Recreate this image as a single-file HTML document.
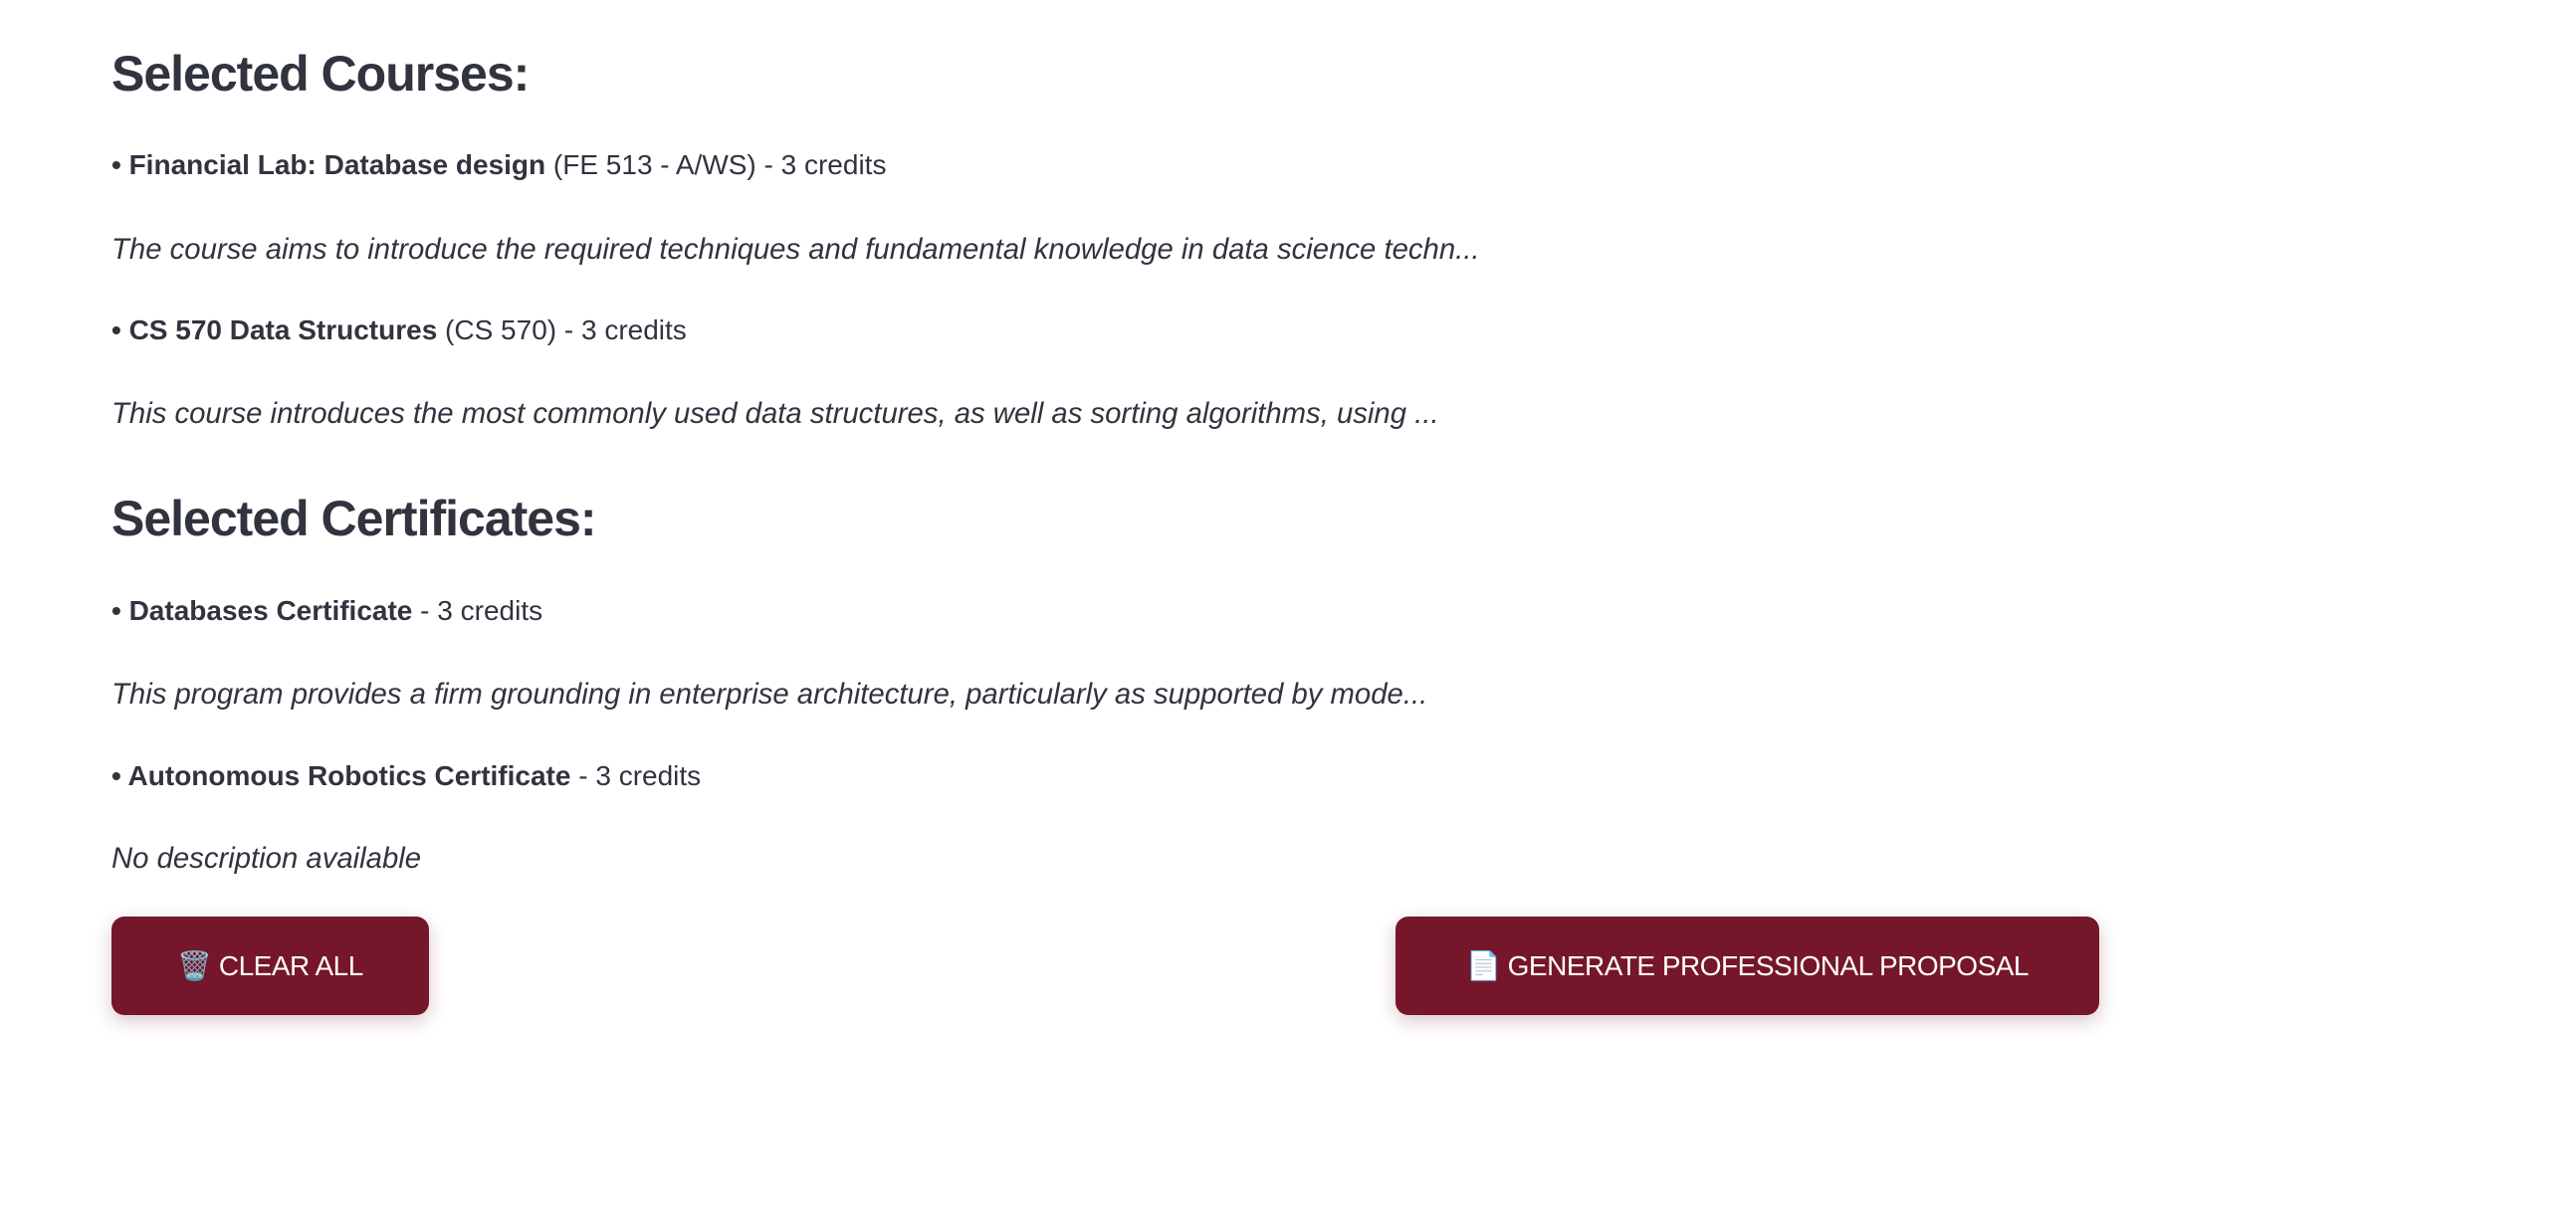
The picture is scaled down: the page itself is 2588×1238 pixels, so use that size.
<!DOCTYPE html>
<html><head><meta charset="utf-8"><style>
html,body{margin:0;padding:0;background:#fff;width:2588px;height:1238px;overflow:hidden;}
body{font-family:"Liberation Sans",sans-serif;color:#31333f;position:relative;}
.t{position:absolute;left:112px;white-space:nowrap;font-size:28px;line-height:34px;}
.t.it{font-size:29.3px;}
.h{position:absolute;left:112px;font-weight:bold;font-size:50px;line-height:60px;white-space:nowrap;letter-spacing:-1px;}
i{font-style:italic;}
.btn{position:absolute;top:921px;height:99px;background:#75162a;border-radius:13px;color:#fff;font-size:28px;display:flex;align-items:center;justify-content:center;box-shadow:0 6px 18px rgba(117,22,42,0.25);letter-spacing:-0.5px;}
</style></head><body>
<div class="h" style="top:44px">Selected Courses:</div>
<div class="t" style="top:149px"><b>• Financial Lab: Database design</b> (FE 513 - A/WS) - 3 credits</div>
<div class="t it" style="top:234px"><i>The course aims to introduce the required techniques and fundamental knowledge in data science techn...</i></div>
<div class="t" style="top:315px"><b>• CS 570 Data Structures</b> (CS 570) - 3 credits</div>
<div class="t it" style="top:399px"><i>This course introduces the most commonly used data structures, as well as sorting algorithms, using ...</i></div>
<div class="h" style="top:491px">Selected Certificates:</div>
<div class="t" style="top:597px"><b>• Databases Certificate</b> - 3 credits</div>
<div class="t it" style="top:681px"><i>This program provides a firm grounding in enterprise architecture, particularly as supported by mode...</i></div>
<div class="t" style="top:763px"><b>• Autonomous Robotics Certificate</b> - 3 credits</div>
<div class="t it" style="top:846px"><i>No description available</i></div>
<div class="btn" style="left:112px;width:319px">🗑️ CLEAR ALL</div>
<div class="btn" style="left:1402px;width:707px">📄 GENERATE PROFESSIONAL PROPOSAL</div>
</body></html>
